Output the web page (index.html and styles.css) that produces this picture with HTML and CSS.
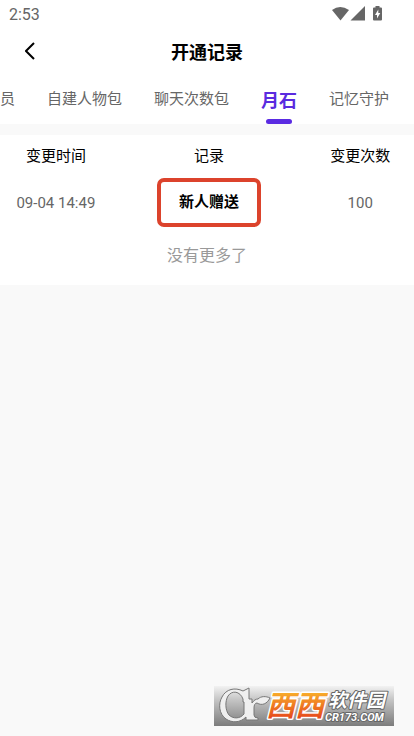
FILE: index.html
```html
<!DOCTYPE html>
<html lang="zh-CN">
<head>
<meta charset="utf-8">
<meta name="viewport" content="width=device-width, initial-scale=1">
<title>开通记录</title>
<link rel="stylesheet" href="styles.css">
</head>
<body>
<div class="status">
  <span>2:53</span>
  <svg class="status-icons" viewBox="0 0 52 16" aria-hidden="true">
    <path d="M0 4Q8-2 17 4L8.500 14.500Z"/>
    <path d="M33 0V14.500H18.500Z"/>
    <path d="M43.500 0h4v1.500H49q1 0 1 1v11q0 1-1 1h-7q-1 0-1-1v-11q0-1 1-1h1.500Z"/>
    <path class="bolt" d="M46.300 3.500L43 9h2v3.500L48.300 7h-2Z"/>
  </svg>
</div>
<header class="header">
  <button class="back" type="button" aria-label="返回">
    <svg viewBox="0 0 10 18" aria-hidden="true"><path d="M9 1L1 9l8 8"/></svg>
  </button>
  <h1>开通记录</h1>
</header>
<nav class="tabs">
  <a href="#member">会员</a>
  <a href="#character">自建人物包</a>
  <a href="#chat">聊天次数包</a>
  <a href="#moonstone" class="active" aria-current="page">月石</a>
  <a href="#memory">记忆守护</a>
</nav>
<main class="panel">
  <table>
    <thead>
      <tr><th class="time">变更时间</th><th>记录</th><th class="count">变更次数</th></tr>
    </thead>
    <tbody>
      <tr><td>09-04 14:49</td><td><strong class="marked">新人赠送</strong></td><td>100</td></tr>
    </tbody>
  </table>
  <p class="end">没有更多了</p>
</main>
<footer class="brand">
  <svg viewBox="0 0 180 40" role="img" aria-label="西西软件园 CR173.COM">
    <defs>
      <linearGradient id="plate" x2="0" y2="1"><stop stop-color="#f2f2f2"/><stop offset=".35" stop-color="#c4c4c4"/><stop offset="1" stop-color="#7c7c7c"/></linearGradient>
      <linearGradient id="orange" x2="0" y2="1"><stop offset=".2" stop-color="#f9b52c"/><stop offset=".85" stop-color="#e64a1c"/></linearGradient>
    </defs>
    <rect width="180" height="40" fill="url(#plate)"/>
    <path class="mark" d="M29 5L35 2V13H38V17C40 14 42 13 44 13C47 10 52 10 56 12C53 18 48 20 43 17C41 17 40 19 40 22V29Q40 32 44 32V34H32V31C26 37 18 37 12 33C5 28 4 18 8 11C12 3 21 1 29 5ZM29 13C26 5 18 4 14 10C11 15 11 24 15 29C19 33 26 33 30 28V16H29Z" fill-rule="evenodd"/>
    <text class="xi" x="52" y="30">西西</text>
    <text class="park" x="114" y="21">软件园</text>
    <text class="domain" x="111" y="35">CR173.COM</text>
  </svg>
</footer>
</body>
</html>
```
FILE: styles.css
```css
* { box-sizing: border-box; }
body {
  margin: 0;
  min-height: 100vh;
  display: flex;
  flex-direction: column;
  overflow-x: hidden;
  background: #f9f9f9;
  color: #000;
  font-family: Roboto, "Noto Sans CJK SC", sans-serif;
  font-size: 15px;
}
.status {
  display: flex;
  justify-content: space-between;
  align-items: center;
  height: 28px;
  padding: 0 30px 0 9px;
  background: #fff;
  color: #666;
  font-size: 16px;
}
.status-icons { width: 52px; height: 16px; fill: #666; }
.status-icons .bolt { fill: #fff; }
.header {
  display: grid;
  grid-template-columns: 60px 1fr 60px;
  align-items: center;
  height: 46px;
  background: #fff;
}
.back { height: 46px; padding: 0; border: 0; background: none; }
.back svg {
  display: block;
  width: 10px;
  height: 18px;
  margin: 0 auto;
  fill: none;
  stroke: #000;
  stroke-width: 2;
}
h1 { margin: 0; font-size: 18px; font-weight: 700; text-align: center; }
.tabs {
  display: flex;
  justify-content: flex-end;
  gap: 32px;
  height: 50px;
  padding-right: 25px;
  background: #fff;
  white-space: nowrap;
}
.tabs a {
  display: flex;
  flex: none;
  flex-direction: column;
  align-items: center;
  justify-content: flex-start;
  color: #666;
  line-height: 50px;
  text-decoration: none;
}
.tabs .active {
  position: relative;
  color: #5a2bdf;
  font-size: 18px;
  font-weight: 700;
  line-height: 53px;
}
.active::after {
  content: "";
  position: absolute;
  bottom: 0;
  width: 26px;
  height: 5px;
  border-radius: 3px;
  background: #5a2be2;
}
.panel { margin-top: 11px; background: #fff; }
table { width: 100%; border-collapse: collapse; table-layout: fixed; text-align: center; }
th, td { padding: 0; }
th { height: 43px; font-weight: 400; line-height: 43px; vertical-align: top; }
td { height: 49px; color: #666; }
.time { width: 27%; }
.count { width: 26%; }
.marked {
  display: inline-block;
  padding: 0 18px;
  border: 4px solid #dc432c;
  border-radius: 7px;
  color: #000;
  font-weight: 700;
  line-height: 41px;
  vertical-align: middle;
}
.end { margin: 0; color: #999; font-size: 16px; line-height: 58px; text-align: center; }
.brand { margin-top: auto; padding: 0 20px 10px; }
.brand svg { display: block; width: 180px; height: 40px; margin-left: auto; }
.mark { fill: #efefef; stroke: #777; }
.brand text {
  font-family: "Noto Sans CJK SC", sans-serif;
  font-style: italic;
  font-weight: 700;
  paint-order: stroke;
  stroke-linejoin: round;
}
.brand .xi { fill: url(#orange); stroke: #fff; stroke-width: 3px; font-size: 29px; }
.brand .park { fill: #fff; stroke: #666; stroke-width: 2px; font-size: 19px; }
.brand .domain { fill: #fff; stroke: #666; stroke-width: 2px; font-family: Roboto, sans-serif; font-size: 11px; }
```
